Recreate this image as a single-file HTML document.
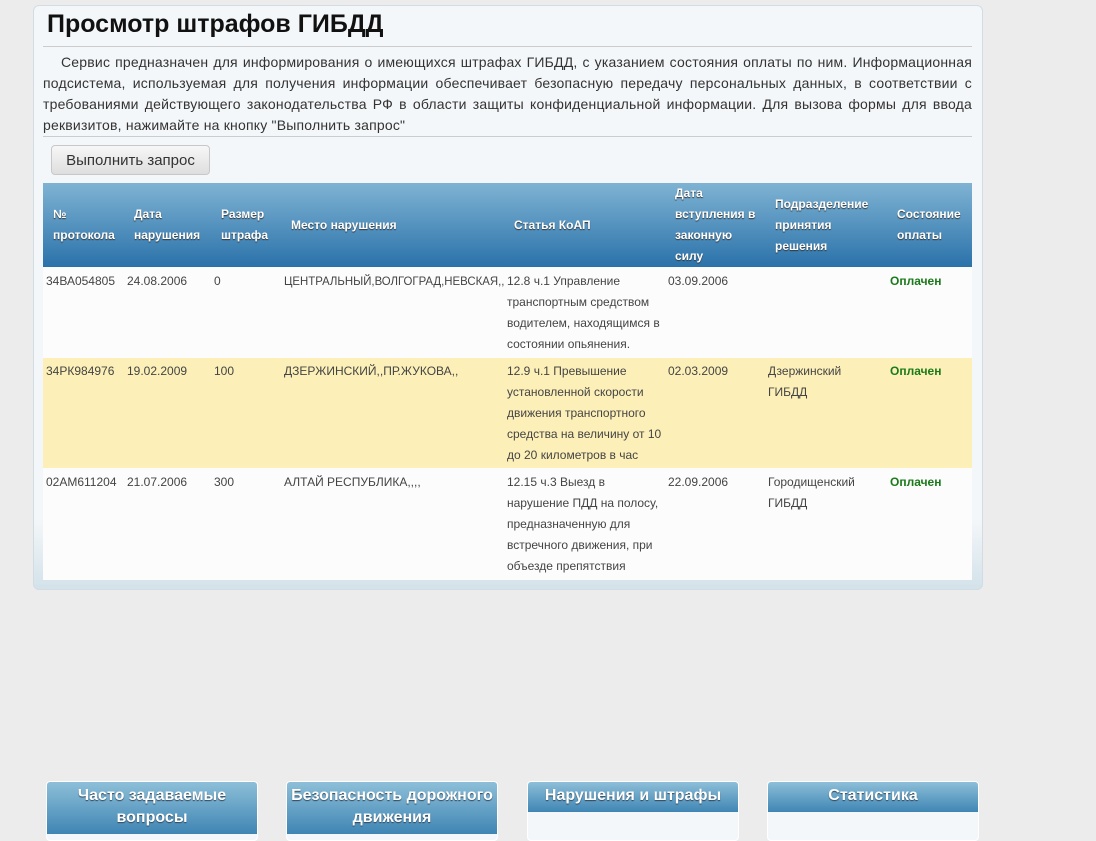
<!DOCTYPE html>
<html><head><meta charset="utf-8"><style>
body{margin:0;width:1096px;height:834px;overflow:hidden;background:#ececec;font-family:"Liberation Sans",sans-serif;position:relative}
.panel{position:absolute;left:33px;top:5px;width:950px;height:585px;border-radius:6px;border:1px solid #d3dce2;background:linear-gradient(#f4f7f9 0,#f4f7f9 88%,#d3e2ea 100%);box-sizing:border-box}
h1{position:absolute;left:47px;top:10px;margin:0;font:bold 25px "Liberation Sans",sans-serif;color:#111}
.hr{position:absolute;left:43px;width:929px;height:1px;background:#ccc}
.p{position:absolute;left:43px;top:52px;width:929px;font-size:14px;line-height:21px;color:#333;text-align:justify;text-indent:18px;letter-spacing:0.2px}
.btn{position:absolute;left:51px;top:145px;width:159px;height:30px;border:1px solid #c8c8c8;border-radius:4px;background:linear-gradient(#f7f7f7,#dedede);font-size:15px;color:#333;text-align:center;line-height:29px;box-sizing:border-box}
.th{position:absolute;left:43px;top:183px;width:929px;height:84px;background:linear-gradient(#7fb3d3,#2b72aa)}
.h{position:absolute;color:#fff;font-weight:bold;font-size:12px;line-height:21px;text-shadow:0 1px 1px #333}
.row{position:absolute;left:43px;width:929px}
.c{position:absolute;font-size:12px;line-height:21px;color:#444}
.g{color:#1a7a1a;font-weight:bold}
.box{position:absolute;top:781px;width:212px;height:60px;border:1px solid #fff;border-radius:4px;background:#f3f7f9;box-sizing:border-box;overflow:hidden}
.bh{background:linear-gradient(#8dbfd8,#3f85b4);color:#fff;font:bold 16px "Liberation Sans",sans-serif;text-align:center;line-height:22px;padding:3px 0 5px;text-shadow:0 1px 1px #345}
</style></head><body>
<div class="panel"></div>
<h1>Просмотр штрафов ГИБДД</h1>
<div class="hr" style="top:46px"></div>
<div class="p">Сервис предназначен для информирования о имеющихся штрафах ГИБДД, с указанием состояния оплаты по ним. Информационная подсистема, используемая для получения информации обеспечивает безопасную передачу персональных данных, в соответствии с требованиями действующего законодательства РФ в области защиты конфиденциальной информации. Для вызова формы для ввода реквизитов, нажимайте на кнопку "Выполнить запрос"</div>
<div class="hr" style="top:136px"></div>
<div class="btn">Выполнить запрос</div>
<div class="th"></div>
<div class="h" style="left:53px;top:204px">№<br>протокола</div>
<div class="h" style="left:134px;top:204px">Дата<br>нарушения</div>
<div class="h" style="left:221px;top:204px">Размер<br>штрафа</div>
<div class="h" style="left:291px;top:215px">Место нарушения</div>
<div class="h" style="left:514px;top:215px">Статья КоАП</div>
<div class="h" style="left:675px;top:183px">Дата<br>вступления в<br>законную<br>силу</div>
<div class="h" style="left:775px;top:194px">Подразделение<br>принятия<br>решения</div>
<div class="h" style="left:897px;top:204px">Состояние<br>оплаты</div>

<div class="row" style="top:267px;height:91px;background:#fcfcfc"></div>
<div class="row" style="top:358px;height:110px;background:#fcf0b8"></div>
<div class="row" style="top:468px;height:112px;background:#fcfcfc"></div>

<div class="c" style="left:46px;top:271px">34ВА054805</div>
<div class="c" style="left:127px;top:271px">24.08.2006</div>
<div class="c" style="left:214px;top:271px">0</div>
<div class="c" style="left:284px;top:271px;transform:scaleX(0.95);transform-origin:0 0">ЦЕНТРАЛЬНЫЙ,ВОЛГОГРАД,НЕВСКАЯ,,</div>
<div class="c" style="left:507px;top:271px">12.8 ч.1 Управление<br>транспортным средством<br>водителем, находящимся в<br>состоянии опьянения.</div>
<div class="c" style="left:668px;top:271px">03.09.2006</div>
<div class="c g" style="left:890px;top:271px">Оплачен</div>

<div class="c" style="left:46px;top:361px">34РК984976</div>
<div class="c" style="left:127px;top:361px">19.02.2009</div>
<div class="c" style="left:214px;top:361px">100</div>
<div class="c" style="left:284px;top:361px">ДЗЕРЖИНСКИЙ,,ПР.ЖУКОВА,,</div>
<div class="c" style="left:507px;top:361px">12.9 ч.1 Превышение<br>установленной скорости<br>движения транспортного<br>средства на величину от 10<br>до 20 километров в час</div>
<div class="c" style="left:668px;top:361px">02.03.2009</div>
<div class="c" style="left:768px;top:361px">Дзержинский<br>ГИБДД</div>
<div class="c g" style="left:890px;top:361px">Оплачен</div>

<div class="c" style="left:46px;top:472px">02АМ611204</div>
<div class="c" style="left:127px;top:472px">21.07.2006</div>
<div class="c" style="left:214px;top:472px">300</div>
<div class="c" style="left:284px;top:472px">АЛТАЙ РЕСПУБЛИКА,,,,</div>
<div class="c" style="left:507px;top:472px">12.15 ч.3 Выезд в<br>нарушение ПДД на полосу,<br>предназначенную для<br>встречного движения, при<br>объезде препятствия</div>
<div class="c" style="left:668px;top:472px">22.09.2006</div>
<div class="c" style="left:768px;top:472px">Городищенский<br>ГИБДД</div>
<div class="c g" style="left:890px;top:472px">Оплачен</div>

<div class="box" style="left:46px"><div class="bh">Часто задаваемые<br>вопросы</div></div>
<div class="box" style="left:286px"><div class="bh">Безопасность дорожного<br>движения</div></div>
<div class="box" style="left:527px"><div class="bh">Нарушения и штрафы</div></div>
<div class="box" style="left:767px"><div class="bh">Статистика</div></div>
</body></html>
